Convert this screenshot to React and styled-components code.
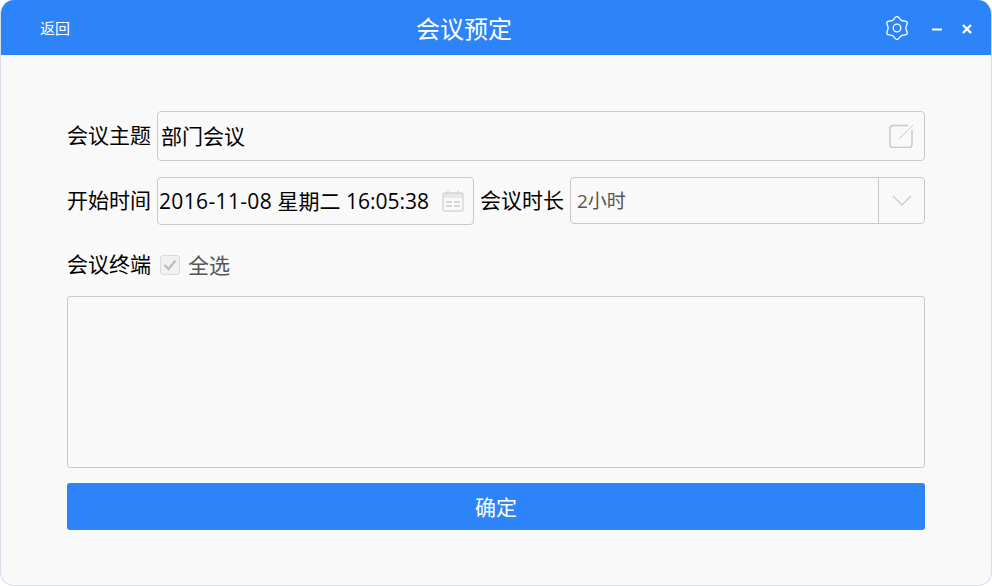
import React from 'react';
import styled, { createGlobalStyle } from 'styled-components';

const FONT = `"Open Sans", "Noto Sans CJK SC", sans-serif`;

// six rounded lobes, one pointing straight up
const gearPath = () => {
    const pt = (r, deg) => {
        const a = (deg * Math.PI) / 180;
        return [12 + r * Math.cos(a), 12 + r * Math.sin(a)];
    };
    const tan = (deg, t) => {
        const a = (deg * Math.PI) / 180;
        return [-Math.sin(a) * t, Math.cos(a) * t];
    };
    let d = '';
    for (let i = 0; i < 12; i++) {
        const a = -90 + i * 30;
        const b = a + 30;
        const p = pt(i % 2 ? 8.8 : 11.6, a);
        const q = pt(i % 2 ? 11.6 : 8.8, b);
        const t1 = tan(a, 1.7);
        const t2 = tan(b, 1.7);
        if (i === 0) d += `M${p[0].toFixed(2)} ${p[1].toFixed(2)}`;
        d += `C${(p[0] + t1[0]).toFixed(2)} ${(p[1] + t1[1]).toFixed(2)} ${(q[0] - t2[0]).toFixed(2)} ${(q[1] - t2[1]).toFixed(2)} ${q[0].toFixed(2)} ${q[1].toFixed(2)}`;
    }
    return `${d}Z`;
};

const Global = createGlobalStyle`
    html, body {
        margin: 0;
        padding: 0;
        background: #fff;
    }
    * {
        box-sizing: border-box;
    }
`;

const WINDOW = styled.div`
    width: 992px;
    height: 586px;
    display: flex;
    flex-direction: column;
    background: #f9f9f9;
    border: 1px solid #d6dce8;
    border-top: 0;
    border-radius: 14px;
    overflow: hidden;
    font-family: ${FONT};
    color: #000;
`;

const TITLEBAR = styled.header`
    height: 55px;
    margin: 0 -1px;
    flex: none;
    display: grid;
    grid-template-columns: 416px auto 1fr;
    align-items: center;
    background: #2d84f8;
    color: #fff;
`;

const BACK = styled.a`
    padding: 0 0 3px 40px;
    font-size: 15px;
`;

const TITLE = styled.h1`
    margin: 0;
    font-size: 24px;
    font-weight: 400;
    line-height: 57px;
`;

const TOOLS = styled.div`
    display: flex;
    justify-content: flex-end;
    align-items: center;
    padding-right: 19px;
`;

const TOOL = styled.svg`
    display: block;
    margin-left: ${p => p.$gap}px;
`;

const GEAR = styled(TOOL)`
    margin-bottom: 2px;
`;

const FORM = styled.main`
    flex: 1;
    padding: 56px 66px 0;
    display: flex;
    flex-direction: column;
`;

const ROW = styled.div`
    display: flex;
    align-items: center;
    height: ${p => p.$h}px;
    margin-bottom: ${p => p.$mb}px;
`;

const LABEL = styled.label`
    flex: none;
    width: 84px;
    margin-right: 6px;
    padding-bottom: 2px;
    font-size: 21px;
    line-height: 28px;
    white-space: nowrap;
`;

const SIDELABEL = styled(LABEL)`
    margin-left: 6px;
    margin-right: 0;
`;

const FIELD = styled.div`
    height: 100%;
    display: flex;
    align-items: center;
    justify-content: space-between;
    flex: ${p => (p.$w ? 'none' : 1)};
    width: ${p => (p.$w ? `${p.$w}px` : 'auto')};
    padding-left: ${p => p.$pl}px;
    padding-right: ${p => p.$pr}px;
    border: 1px solid #c9c9c9;
    border-radius: 4px;
    font-size: 21px;
    white-space: nowrap;
`;

const VALUE = styled.span`
    padding-bottom: 2px;
`;

const DATEPART = styled.span`
    letter-spacing: 0.35px;
`;

const SELECT = styled.div`
    flex: 1;
    height: 47px;
    align-self: flex-start;
    display: flex;
    align-items: center;
    margin-left: 6px;
    border: 1px solid #c9c9c9;
    border-radius: 4px;
    color: #555;
    font-size: 19px;
`;

const SELECTVALUE = styled.span`
    flex: 1;
    padding: 0 0 2px 6px;
`;

const ARROW = styled.div`
    flex: none;
    width: 46px;
    height: 100%;
    display: flex;
    align-items: center;
    justify-content: center;
    border-left: 1px solid #c9c9c9;
`;

const CHECK = styled.span`
    flex: none;
    width: 20px;
    height: 20px;
    margin: 0 8px 0 3px;
    display: flex;
    align-items: center;
    justify-content: center;
    background: #f1f1f1;
    border: 1px solid #dcdcdc;
    border-radius: 3px;
`;

const CHECKTEXT = styled.span`
    padding-bottom: 2px;
    font-size: 21px;
    color: #555;
`;

const LISTBOX = styled.div`
    height: 172px;
    margin-bottom: 15px;
    border: 1px solid #c9c9c9;
    border-radius: 3px;
`;

const SUBMIT = styled.button`
    height: 47px;
    padding: 0 0 2px;
    border: 0;
    border-radius: 3px;
    background: #2d84f8;
    color: #fff;
    font-family: ${FONT};
    font-size: 21px;
`;

const App = () => {
    return (
        <WINDOW>
            <Global />
            <TITLEBAR>
                <BACK>返回</BACK>
                <TITLE>会议预定</TITLE>
                <TOOLS>
                    <GEAR width="24" height="24" viewBox="0 0 24 24" fill="none" stroke="#fff" strokeWidth="1.3">
                        <path d={gearPath()} />
                        <circle cx="12" cy="12" r="3.800" />
                    </GEAR>
                    <TOOL $gap={22} width="12" height="12" viewBox="0 0 12 12" fill="none" stroke="#fff" strokeWidth="2">
                        <path d="M1 6.500h10" />
                    </TOOL>
                    <TOOL $gap={18} width="12" height="12" viewBox="0 0 12 12" fill="none" stroke="#fff" strokeWidth="2.400">
                        <path d="M2 2l8 8M10 2l-8 8" />
                    </TOOL>
                </TOOLS>
            </TITLEBAR>
            <FORM>
                <ROW $h={50} $mb={16}>
                    <LABEL>会议主题</LABEL>
                    <FIELD $pl={3} $pr={11}>
                        <VALUE>部门会议</VALUE>
                        <svg width="24" height="24" viewBox="0 0 24 24" fill="none" stroke="#c8c8c8" strokeWidth="1.500">
                            <path d="M19 1.500H4a3 3 0 0 0-3 3v16a3 3 0 0 0 3 3h16a3 3 0 0 0 3-3V6" />
                            <path d="M10 15L24 1" strokeWidth="1" />
                        </svg>
                    </FIELD>
                </ROW>
                <ROW $h={48} $mb={26}>
                    <LABEL>开始时间</LABEL>
                    <FIELD $w={317} $pl={1} $pr={9}>
                        <VALUE><DATEPART>2016-11-08</DATEPART> 星期二 16:05:38</VALUE>
                        <svg width="22" height="22" viewBox="0 0 22 22" fill="none" stroke="#d6d6d6" strokeWidth="1.500">
                            <path d="M1 5.500h20" stroke="#e8e8e8" strokeWidth="5" />
                            <rect x="1" y="3" width="20" height="18" rx="2" />
                            <path d="M6 0.500v4M16 0.500v4" />
                            <path d="M4 12h6M12 12h6M4 16h6M12 16h6" strokeWidth="2" />
                        </svg>
                    </FIELD>
                    <SIDELABEL as="span">会议时长</SIDELABEL>
                    <SELECT>
                        <SELECTVALUE>2小时</SELECTVALUE>
                        <ARROW>
                            <svg width="20" height="12" viewBox="0 0 20 12" fill="none" stroke="#c8c8c8" strokeWidth="1.200">
                                <path d="M1 1l9 9 9-9" />
                            </svg>
                        </ARROW>
                    </SELECT>
                </ROW>
                <ROW $h={28} $mb={17}>
                    <LABEL>会议终端</LABEL>
                    <CHECK>
                        <svg width="14" height="12" viewBox="0 0 14 12" fill="none" stroke="#bdbdbd" strokeWidth="2.400">
                            <path d="M1.500 6l4 4 7-8.500" />
                        </svg>
                    </CHECK>
                    <CHECKTEXT>全选</CHECKTEXT>
                </ROW>
                <LISTBOX />
                <SUBMIT>确定</SUBMIT>
            </FORM>
        </WINDOW>
    );
};

export default App;
